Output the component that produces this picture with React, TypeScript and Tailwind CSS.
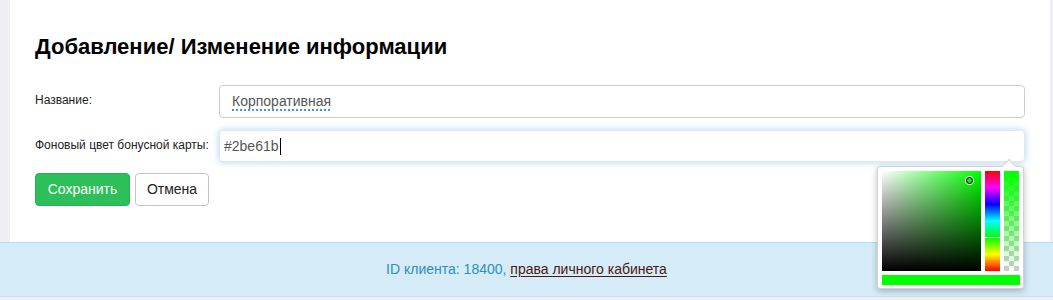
import * as React from "react";

const font = "font-['Liberation_Sans',Arial,sans-serif]";

function ColorPicker() {
    return (
        <div className="absolute right-px top-[calc(100%+4px)] z-10 w-[147px] rounded-[3px] border border-[#cfd3d8] bg-white px-1 pb-[3px] pt-1 shadow-[0_2px_6px_rgba(0,0,0,0.25)]">
            {/* arrow */}
            <div className="absolute -top-[6px] right-[9px] h-[10px] w-[10px] rotate-45 border-l border-t border-[#cfd3d8] bg-white" />
            <div className="flex gap-1">
                <div className="relative h-[100px] w-[100px] bg-[#00ff00]">
                    <div className="absolute inset-0 bg-linear-to-r from-white to-transparent" />
                    <div className="absolute inset-0 bg-linear-to-t from-black to-transparent" />
                    <div className="absolute left-[84px] top-[6px] h-[7px] w-[7px] rounded-full border-[1.5px] border-black ring-1 ring-white" />
                </div>
                <div className="relative h-[100px] w-[15px] bg-[linear-gradient(to_bottom,#f00_0%,#f0f_16.66%,#00f_33.33%,#0ff_50%,#0f0_66.66%,#ff0_83.33%,#f00_100%)]">
                    <div className="absolute left-0 right-0 top-[66px] h-px bg-white" />
                </div>
                <div className="relative h-[100px] w-[15px] bg-[conic-gradient(#cccccc_25%,#ffffff_0_50%,#cccccc_0_75%,#ffffff_0)] bg-[length:10px_10px]">
                    <div className="absolute inset-0 bg-linear-to-b from-[#00ff00] to-transparent" />
                </div>
            </div>
            <div className="mt-1 h-[10px] w-[138px] bg-[#00ff00]" />
        </div>
    );
}

export default function App() {
    return (
        <div className={`h-[300px] overflow-hidden bg-[#eeeef3] text-[#222] ${font}`}>
            <div className="ml-[10px] mr-[3px] h-[242px] bg-white px-[25px] pt-[35px]">
                <h1 className="text-[22px] font-bold leading-6 text-black">
                    Добавление/ Изменение информации
                </h1>

                <div className="mt-[26px] flex">
                    <div className="w-[184px] shrink-0 pt-[7px] text-[12px] leading-4">Название:</div>
                    <div className="flex h-[33px] flex-1 items-center rounded-[4px] border border-[#cccccc] bg-white pl-[12px] text-[14px] text-[#555]">
                        <span className="underline decoration-[#4a90e2] decoration-dotted decoration-[1.5px] underline-offset-[3px]">
                            Корпоративная
                        </span>
                    </div>
                </div>

                <div className="mt-[12px] flex">
                    <div className="w-[184px] shrink-0 pt-[7px] text-[12px] leading-4">
                        Фоновый цвет бонусной карты:
                    </div>
                    <div className="relative flex-1">
                        <div className="flex h-[32px] items-center rounded-[4px] border border-[#e3e8ee] bg-white pl-[4px] text-[14px] text-[#555] shadow-[0_0_7px_rgba(102,175,233,0.55)]">
                            #2be61b
                            <span className="ml-px inline-block h-[17px] w-px bg-black" />
                        </div>
                        <ColorPicker />
                    </div>
                </div>

                <div className="mt-[11px] flex gap-[5px]">
                    <button className="h-[33px] w-[95px] rounded-[4px] border border-[#27b054] bg-[#2cbf5a] text-[14px] text-white">
                        Сохранить
                    </button>
                    <button className="h-[33px] w-[74px] rounded-[4px] border border-[#c4c4c4] bg-white text-[14px] text-[#222]">
                        Отмена
                    </button>
                </div>
            </div>

            <div className="flex h-[55px] items-center justify-center border-b border-t border-b-[#c6e2f0] border-t-[#aee0f3] bg-[#d5ebf7] text-[14px]">
                <span className="text-[#2d8fbf]">ID клиента: 18400,&nbsp;</span>
                <a href="#" className="text-[#4a1a10] underline underline-offset-2">
                    права личного кабинета
                </a>
            </div>
        </div>
    );
}
